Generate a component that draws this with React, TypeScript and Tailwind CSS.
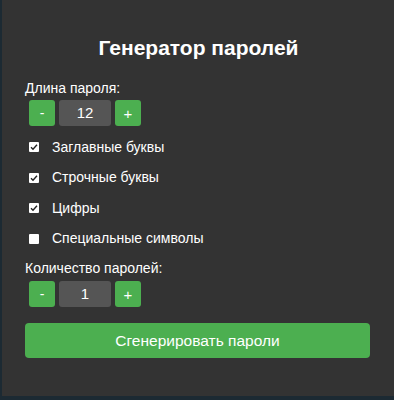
import { useState } from "react";

const OPTIONS = [
  { id: "upper", label: "Заглавные буквы", checked: true },
  { id: "lower", label: "Строчные буквы", checked: true },
  { id: "digits", label: "Цифры", checked: true },
  { id: "special", label: "Специальные символы", checked: false },
];

function Stepper({ value, onChange }: { value: number; onChange: (v: number) => void }) {
  return (
    <div className="flex gap-[4px] ml-[4px] h-[26px]">
      <button
        onClick={() => onChange(value - 1)}
        className="w-[26px] h-[26px] rounded-[3px] bg-[#4caf50] text-white text-[14px] leading-none"
      >
        -
      </button>
      <div className="w-[52px] h-[26px] rounded-[3px] bg-[#555555] text-white text-[15px] flex items-center justify-center">
        {value}
      </div>
      <button
        onClick={() => onChange(value + 1)}
        className="w-[26px] h-[26px] rounded-[3px] bg-[#4caf50] text-white text-[15px] leading-none"
      >
        +
      </button>
    </div>
  );
}

function CheckBox({ checked }: { checked: boolean }) {
  return (
    <span className="w-[10px] h-[10px] bg-white rounded-[1px] flex items-center justify-center">
      {checked && (
        <svg width="8" height="8" viewBox="0 0 8 8">
          <path d="M1 4.2 L3 6.2 L7 1.8" fill="none" stroke="#222" strokeWidth="1.4" />
        </svg>
      )}
    </span>
  );
}

export default function App() {
  const [length, setLength] = useState(12);
  const [count, setCount] = useState(1);
  const [opts, setOpts] = useState(OPTIONS);

  return (
    <div className="w-[394px] h-[400px] bg-[#1c2a33] overflow-hidden" style={{ fontFamily: '"Liberation Sans", Arial, sans-serif' }}>
      <div className="ml-[2px] h-[396px] bg-[#333333] text-white pl-[23px] pr-[22px] pt-[36px]">
        <h2 className="text-[21px] leading-[24px] font-bold text-center">Генератор паролей</h2>

        <p className="mt-[19px] text-[14px] leading-[18px]">Длина пароля:</p>
        <div className="mt-[3px]">
          <Stepper value={length} onChange={setLength} />
        </div>

        {/* Options */}
        <div className="mt-[11px] flex flex-col gap-[10.5px]">
          {opts.map((o) => (
            <label
              key={o.id}
              className="h-5 flex items-center ml-[4px] gap-[13px] text-[14px] cursor-pointer"
              onClick={() => setOpts(opts.map((x) => (x.id === o.id ? { ...x, checked: !x.checked } : x)))}
            >
              <CheckBox checked={o.checked} />
              {o.label}
            </label>
          ))}
        </div>

        <p className="mt-[10.5px] text-[14px] leading-[18px]">Количество паролей:</p>
        <div className="mt-[4px]">
          <Stepper value={count} onChange={setCount} />
        </div>

        <button className="mt-[16px] w-[345px] h-[35px] rounded-[4px] bg-[#4caf50] text-white text-[15.5px]">
          Сгенерировать пароли
        </button>
      </div>
    </div>
  );
}
